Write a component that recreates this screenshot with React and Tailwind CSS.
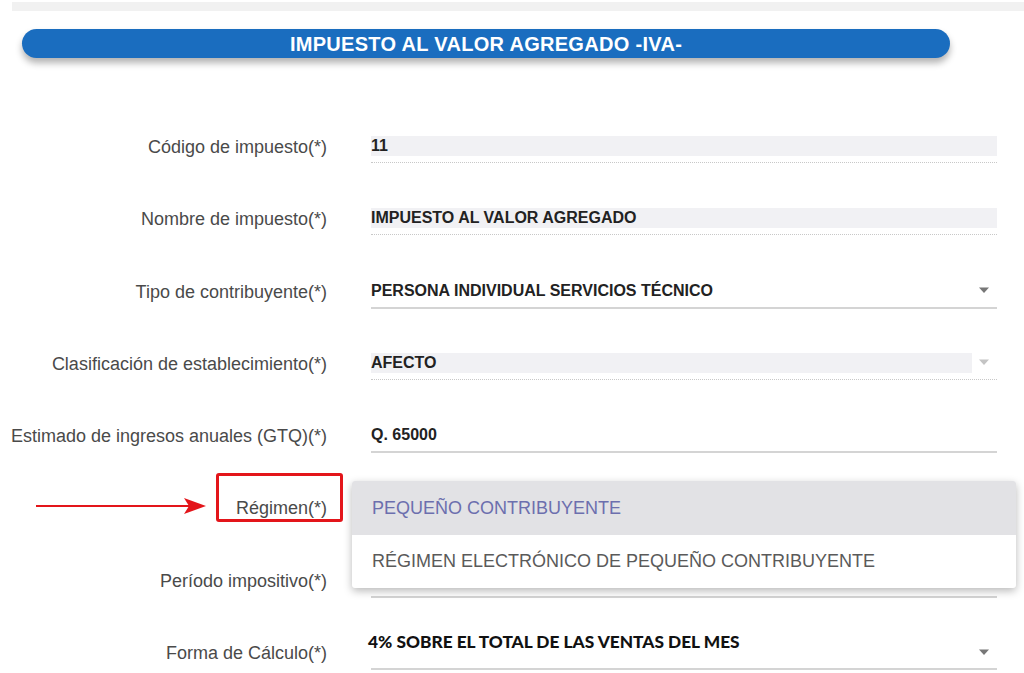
import React from 'react';

const Caret = ({ light }) => (
  <svg width="12" height="7" viewBox="0 0 12 7" className="shrink-0">
    <path d="M1 0.5h10L6 6z" fill={light ? '#c4c4c4' : '#777'} />
  </svg>
);

const rows = [
  { label: 'Código de impuesto(*)', value: '11', kind: 'readonly' },
  { label: 'Nombre de impuesto(*)', value: 'IMPUESTO AL VALOR AGREGADO', kind: 'readonly' },
  { label: 'Tipo de contribuyente(*)', value: 'PERSONA INDIVIDUAL SERVICIOS TÉCNICO', kind: 'select' },
  { label: 'Clasificación de establecimiento(*)', value: 'AFECTO', kind: 'disabledSelect' },
  { label: 'Estimado de ingresos anuales (GTQ)(*)', value: 'Q. 65000', kind: 'input' },
  { label: 'Régimen(*)', value: '', kind: 'regimen' },
  { label: 'Período impositivo(*)', value: '', kind: 'input' },
  { label: 'Forma de Cálculo(*)', value: '4% SOBRE EL TOTAL DE LAS VENTAS DEL MES', kind: 'calc' },
];

const Field = ({ row }) => {
  const valueCls = "text-[16px] font-bold text-[#222] font-['Liberation_Sans',Arial,sans-serif] leading-[20px]";

  if (row.kind === 'readonly') {
    return (
      <div>
        <div className="h-[20px] bg-[#f1f1f4] flex items-center">
          <span className={valueCls}>{row.value}</span>
        </div>
        <div className="mt-[6px] border-b border-dotted border-[#c8c8c8]" />
      </div>
    );
  }

  if (row.kind === 'disabledSelect') {
    return (
      <div>
        <div className="h-[20px] flex items-center">
          <div className="h-full flex-1 bg-[#f1f1f4] flex items-center">
            <span className={valueCls}>{row.value}</span>
          </div>
          <div className="w-[25px] flex justify-end pr-[7px]">
            <Caret light />
          </div>
        </div>
        <div className="mt-[6px] border-b border-dotted border-[#c8c8c8]" />
      </div>
    );
  }

  if (row.kind === 'calc') {
    return (
      <div>
        <div className="h-[20px] flex items-center justify-between">
          <span className="text-[17.3px] font-black text-[#111] font-['Lato',sans-serif] leading-[20px] -mt-[20px] -ml-[3px]">
            {row.value}
          </span>
          <span className="pr-[7px]"><Caret /></span>
        </div>
        <div className="mt-[6px] border-b-2 border-[#d4d4d4]" />
      </div>
    );
  }

  return (
    <div className="relative">
      <div className="h-[20px] flex items-center justify-between">
        <span className={valueCls}>{row.value}</span>
        {row.kind === 'select' && <span className="pr-[7px]"><Caret /></span>}
      </div>
      <div className="mt-[6px] border-b-2 border-[#d4d4d4]" />
      {row.kind === 'regimen' && (
        <div className="absolute left-[-19px] top-[-16px] w-[664px] bg-white rounded-[3px] shadow-[0_3px_9px_rgba(0,0,0,0.28)] z-10 overflow-hidden font-['Liberation_Sans',Arial,sans-serif] text-[18px]">
          <div className="h-[54px] bg-[#e2e2e5] flex items-center pl-[20px] text-[#6c6fae]">
            PEQUEÑO CONTRIBUYENTE
          </div>
          <div className="h-[53px] flex items-center pl-[20px] text-[#5a5a5a]">
            RÉGIMEN ELECTRÓNICO DE PEQUEÑO CONTRIBUYENTE
          </div>
        </div>
      )}
    </div>
  );
};

export default function App() {
  return (
    <div className="w-[1024px] h-[673px] bg-white overflow-hidden relative font-['Liberation_Sans',Arial,sans-serif]">
      <div className="ml-[12px] mt-[2px] h-[9px] bg-[#f1f1f1]" />

      <div className="ml-[22px] mt-[18px] w-[928px] h-[29px] rounded-full bg-[#1a6dbf] shadow-[0_5px_7px_rgba(0,0,0,0.3)] flex items-center justify-center">
        <span className="text-white font-bold text-[20px] tracking-[0.3px] font-['Liberation_Sans',Arial,sans-serif]">
          IMPUESTO AL VALOR AGREGADO -IVA-
        </span>
      </div>

      <div className="mt-[52px] flex flex-col">
        {rows.map((row) => (
          <div key={row.label} className="h-[72.3px] pt-[26px] flex items-start">
            <div className="w-[327px] shrink-0 text-right relative">
              <span className="text-[18px] leading-[20px] text-[#4a4a4a]">{row.label}</span>
              {row.kind === 'regimen' && (
                <>
                  <span className="absolute right-[-16px] top-[-24px] w-[127px] h-[49px] border-[3px] border-[#e3151a] rounded-[3px] pointer-events-none" />
                  <svg className="absolute left-[36px] top-[0px]" width="172" height="20" viewBox="0 0 172 20">
                    <line x1="0" y1="9" x2="158" y2="9" stroke="#e3151a" strokeWidth="2" />
                    <path d="M148 1 L170 9 L148 17 L153 9 Z" fill="#e3151a" />
                  </svg>
                </>
              )}
            </div>
            <div className="ml-[44px] w-[626px]">
              <Field row={row} />
            </div>
          </div>
        ))}
      </div>
    </div>
  );
}
